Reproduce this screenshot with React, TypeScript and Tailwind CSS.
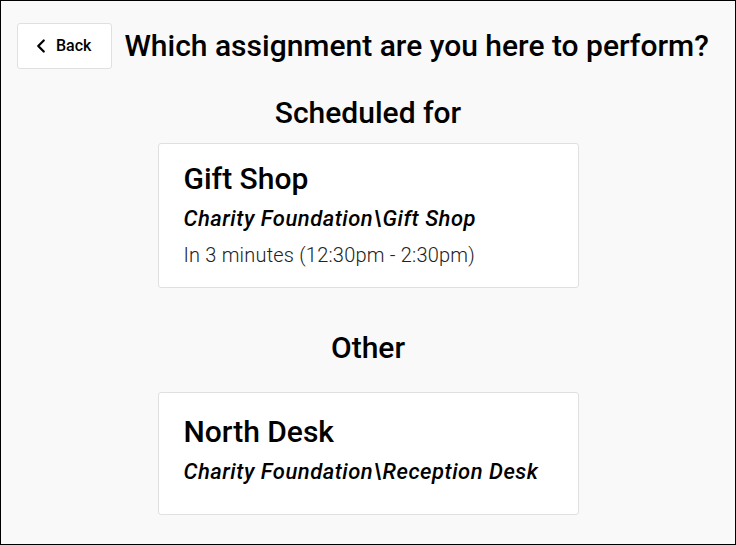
import { ChevronLeft } from 'lucide-react'

interface AssignmentCardProps {
  title: string
  path: string
  when?: string
}

function AssignmentCard({ title, path, when }: AssignmentCardProps) {
  return (
    <button
      className={`w-[421px] text-left bg-white border border-[#e0e0e0] rounded-[3px] px-[25px] ${
        when ? 'pt-[17px] pb-[18px]' : 'pt-[21px] pb-[28px]'
      }`}
    >
      <div className="text-[30px] leading-[36px] font-medium text-black">{title}</div>
      <div className="mt-2 text-[22px] leading-[28px] font-medium italic tracking-[0.5px] text-black">{path}</div>
      {when && (
        <div className="mt-2 text-[20px] leading-[28px] font-light tracking-[0.2px] text-[#222]">{when}</div>
      )}
    </button>
  )
}

export default function App() {
  return (
    <div
      className="w-[736px] h-[545px] border border-black bg-[#f9f9f9] overflow-hidden"
      style={{ fontFamily: 'Roboto, "Noto Sans", sans-serif' }}
    >
      {/* Header */}
      <div className="flex items-center gap-3 pl-4 pt-[22px]">
        <button className="h-[46px] flex items-center gap-1 pl-3 pr-5 bg-white border border-[#e0e0e0] rounded-[3px] text-[16px] font-medium text-black">
          <ChevronLeft size={22} strokeWidth={2.5} />
          <span>Back</span>
        </button>
        <h1 className="text-[30px] leading-[36px] font-medium text-black">Which assignment are you here to perform?</h1>
      </div>

      {/* Scheduled */}
      <div className="flex flex-col items-center">
        <h2 className="mt-[26px] text-[30px] leading-[36px] font-medium text-black">Scheduled for</h2>
        <div className="mt-3">
          <AssignmentCard title="Gift Shop" path="Charity Foundation\Gift Shop" when="In 3 minutes (12:30pm - 2:30pm)" />
        </div>

        <h2 className="mt-[42px] text-[30px] leading-[36px] font-medium text-black">Other</h2>
        <div className="mt-[26px]">
          <AssignmentCard title="North Desk" path="Charity Foundation\Reception Desk" />
        </div>
      </div>
    </div>
  )
}
